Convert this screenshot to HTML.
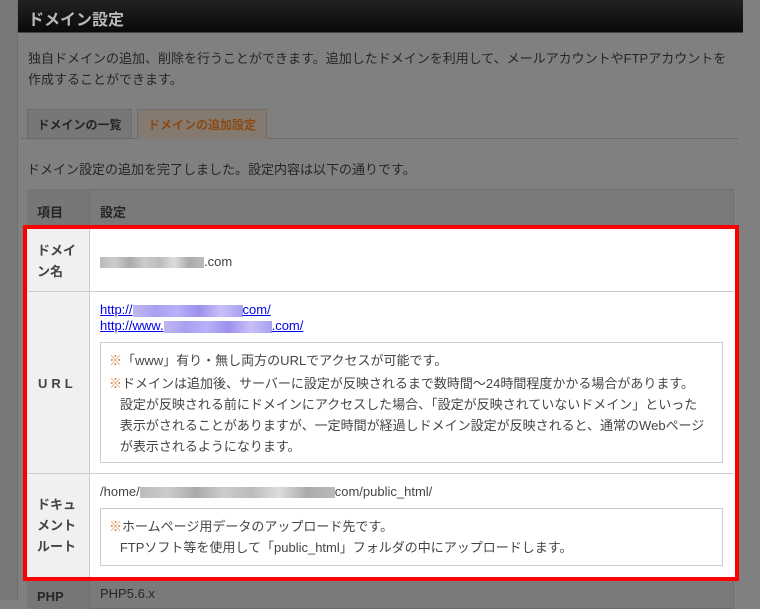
<!DOCTYPE html>
<html style="background:#808080"><head><meta charset="utf-8"><style>
*{margin:0;padding:0;box-sizing:border-box}
html,body{background:#808080}
body{width:760px;height:600px;overflow:hidden;font-family:"Liberation Sans","Noto Sans CJK JP",sans-serif;font-size:13px;color:#222;position:relative}
.a{position:absolute;white-space:nowrap}
.o{color:#e0813a}
.blur{display:inline-block;height:11px;vertical-align:middle;background:linear-gradient(90deg,#bbb,#ccc,#aaa,#ccc,#bbb,#ddd,#aaa,#bbb)}
.bl{display:inline-block;height:12px;vertical-align:middle;background:linear-gradient(90deg,#c0b8f0,#a9a0f0,#b8b0f8,#9c90ee,#c8c0f8,#a8a0f0);}
a{color:#0000ee}
</style></head><body>
<div class="a" style="left:0;top:0;width:760px;height:600px;background:#808080"></div>
<div class="a" style="left:0;top:0;width:18px;height:600px;background:#797979;border-right:1px solid #6e6e6e"></div>
<div class="a" style="left:18px;top:0;width:725px;height:33px;background:linear-gradient(#222,#0a0a0a);border-bottom:1px solid #444"></div>
<div class="a" style="left:28px;top:6px;font-size:16px;font-weight:bold;color:#b8b8b8">ドメイン設定</div>
<div class="a" style="left:28px;top:48px;line-height:21px;color:#262626">独自ドメインの追加、削除を行うことができます。追加したドメインを利用して、メールアカウントやFTPアカウントを<br>作成することができます。</div>
<div class="a" style="left:21px;top:138px;width:717px;border-top:1px solid #6a6a6a"></div>
<div class="a" style="left:27px;top:109px;width:105px;height:29px;background:#777;border:1px solid #6c6c6c;border-bottom:none;font-weight:bold;color:#262626;font-size:12px;text-align:center;line-height:30px">ドメインの一覧</div>
<div class="a" style="left:137px;top:109px;width:130px;height:30px;background:#857a70;border:1px solid #6c6c6c;border-bottom:none;font-weight:bold;color:#8a4a16;font-size:12px;text-align:center;line-height:30px">ドメインの追加設定</div>
<div class="a" style="left:27px;top:159px;color:#262626">ドメイン設定の追加を完了しました。設定内容は以下の通りです。</div>
<div class="a" style="left:27px;top:189px;width:707px;height:420px;background:#7a7a7a;border:1px solid #6e6e6e"></div>
<div class="a" style="left:27px;top:189px;width:63px;height:420px;border-right:1px solid #6e6e6e;background:#777"></div>
<div class="a" style="left:37px;top:202px;font-weight:bold;color:#262626">項目</div>
<div class="a" style="left:100px;top:202px;font-weight:bold;color:#262626">設定</div>
<div class="a" style="left:37px;top:589px;font-weight:bold;color:#262626">PHP</div>
<div class="a" style="left:100px;top:586px;color:#262626">PHP5.6.x</div>
<div class="a" style="left:23px;top:225px;width:716px;height:356px;border:4px solid #ff0000;background:#fff"></div>
<div class="a" style="left:27px;top:229px;width:63px;height:348px;background:#f0f0f0;border-right:1px solid #ccc"></div>
<div class="a" style="left:27px;top:291px;width:707px;border-top:1px solid #ccc"></div>
<div class="a" style="left:27px;top:473px;width:707px;border-top:1px solid #ccc"></div>
<div class="a" style="left:37px;top:240px;font-weight:bold;color:#444;line-height:21px">ドメイ<br>ン名</div>
<div class="a" style="left:100px;top:254px;color:#444"><span class="blur" style="width:104px"></span>.com</div>
<div class="a" style="left:38px;top:376px;font-weight:bold;color:#444;letter-spacing:4px">URL</div>
<div class="a" style="left:100px;top:302px;line-height:16px"><a href="#">http://<span class="bl" style="width:110px"></span>com/</a><br><a href="#">http://www.<span class="bl" style="width:108px"></span>.com/</a></div>
<div class="a" style="left:100px;top:342px;width:623px;height:121px;border:1px solid #ccc"></div>
<div class="a" style="left:109px;top:350px;color:#444;line-height:21px"><span class="o">※</span>「www」有り・無し両方のURLでアクセスが可能です。</div>
<div class="a" style="left:109px;top:373px;color:#444;line-height:21px"><span class="o">※</span>ドメインは追加後、サーバーに設定が反映されるまで数時間～24時間程度かかる場合があります。<br>&nbsp;&nbsp;&nbsp;設定が反映される前にドメインにアクセスした場合、「設定が反映されていないドメイン」といった<br>&nbsp;&nbsp;&nbsp;表示がされることがありますが、一定時間が経過しドメイン設定が反映されると、通常のWebページ<br>&nbsp;&nbsp;&nbsp;が表示されるようになります。</div>
<div class="a" style="left:37px;top:494px;font-weight:bold;color:#444;line-height:21px">ドキュ<br>メント<br>ルート</div>
<div class="a" style="left:100px;top:484px;color:#444">/home/<span class="blur" style="width:195px"></span>com/public_html/</div>
<div class="a" style="left:100px;top:508px;width:623px;height:58px;border:1px solid #ccc"></div>
<div class="a" style="left:109px;top:516px;color:#444;line-height:21px"><span class="o">※</span>ホームページ用データのアップロード先です。<br>&nbsp;&nbsp;&nbsp;FTPソフト等を使用して「public_html」フォルダの中にアップロードします。</div>
</body></html>
